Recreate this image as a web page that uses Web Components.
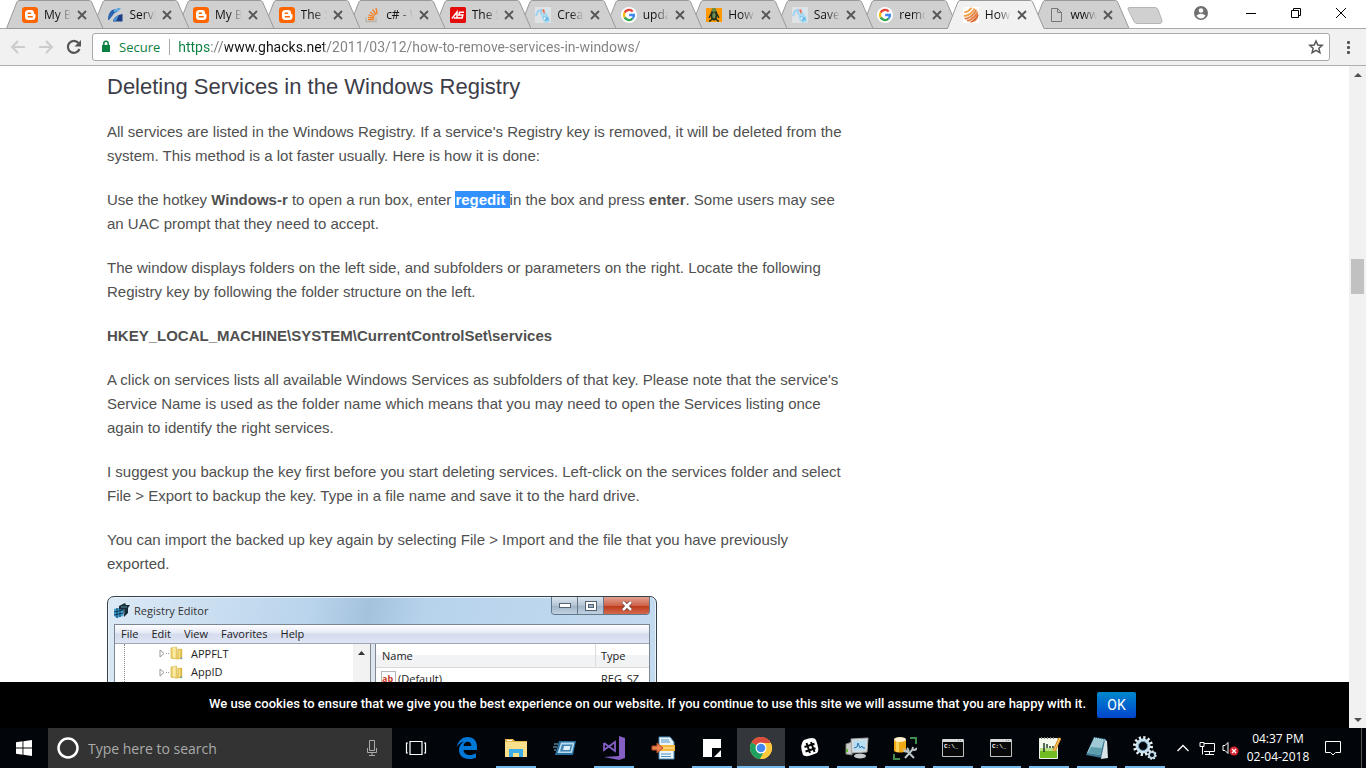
<!DOCTYPE html>
<html lang="en">
<head>
<meta charset="utf-8">
<title>How to remove services in Windows</title>
<style>
html,body{margin:0;height:100%}
body{font-family:"Open Sans","Noto Sans",sans-serif;font-size:12px;background:#fff;overflow:hidden}
</style>
</head>
<body>
<desktop-screen></desktop-screen>
<script>
const reset = `*{box-sizing:border-box}button,input{font:inherit;color:inherit;border:0;padding:0;margin:0;background:none}button{display:grid;place-items:center}svg{display:block}`;
const define = (name, html, setup) => customElements.define(name, class extends HTMLElement {
  constructor() {
    super();
    const t = document.createElement('template');
    t.innerHTML = `<style>${reset}</style>` + html;
    this.attachShadow({ mode: 'open' }).append(t.content.cloneNode(true));
  }
  connectedCallback() { if (setup) setup(this, this.shadowRoot); }
});

const icons = {
  blogger: `<rect width="16" height="16" rx="3" fill="#f60"/><path fill="#fff" d="M6.500 3h2.600A2.900 2.900 0 0 1 12 5.900c0 .8.200 1 .7 1 .4 0 .8.300.8.800v1.800a3.500 3.500 0 0 1-3.500 3.500H6.500A3.500 3.500 0 0 1 3 9.500v-3A3.500 3.500 0 0 1 6.500 3z"/><path stroke="#f60" stroke-width="1.400" stroke-linecap="round" d="M6.300 6.300h2.200M6.300 9.700h4"/>`,
  swirl: `<path fill="#2a63ae" d="M4 3l8-2-3 4q-3 .5-4 3L1 13H0q0-7 4-10z"/><path fill="#62b0e8" d="M6 2.500L13 1l-2 3-5 1z"/><path fill="#1b3f86" d="M14.500 7v7.500H5q1-6 9.500-7.500z"/><path fill="#4e8fd0" d="M5 14.500q1-5 6-6.500l-3 6.500z"/>`,
  stack: `<path fill="none" stroke="#b9b4ae" stroke-width="1.300" d="M2 10v4.500h10V10"/><path stroke="#f48024" stroke-width="1.300" d="M4 12.500h6M4 10.300l6 .6M4.500 7.800l5.800 1.800M6 5l5 3.500M8.500 2.500l3.700 5M12 1l1.200 6"/>`,
  as: `<rect width="16" height="16" rx="1.500" fill="#e60b0b"/><path fill="none" stroke="#fff" stroke-width="1.500" d="M2 11.500L7 5v6H4M14 5.300H9.500l-.7 2.700h4l-.7 3H7.500"/>`,
  figure: `<rect width="16" height="16" fill="#dfe3e6"/><path fill="#a9daf2" d="M6 7l5-2 3 5 1 5-5 1-3-4z"/><path fill="#6bbce8" d="M8 9l3 1 2 0 1 3-4 1z"/><path fill="#e8745a" d="M7 3l2-1 1 3-1 2z"/><path fill="none" stroke="#9fd2ef" stroke-width="2" d="M1 9l2-5 3-1 0 4"/><path stroke="#cfe9f7" stroke-width="2" d="M12 1l0 5"/><path fill="#fff" d="M9 10l2 1-2 2z"/>`,
  google: `<circle cx="8" cy="8" r="8" fill="#fff"/><g fill="none" stroke-width="2.300"><path stroke="#ea4335" d="M11.700 4.600A5 5 0 0 0 3.600 5.600"/><path stroke="#fbbc05" d="M3.600 5.600a5 5 0 0 0 0 4.800"/><path stroke="#34a853" d="M3.600 10.400a5 5 0 0 0 8 1.100"/><path stroke="#4285f4" d="M11.600 11.500A4.800 4.800 0 0 0 13 8H8.200"/></g>`,
  turtle: `<rect y="1" width="16" height="14" fill="#ff9a05"/><path stroke="#26351c" stroke-width="1.500" fill="none" d="M5 7l-2 4M11 7l2 4M6 12l-2 2h-1M10 12l2 2h1"/><ellipse cx="8" cy="8" rx="3.500" ry="5.500" fill="#20301c"/><ellipse cx="8" cy="3" rx="2.500" ry="2" fill="#648a45"/><ellipse cx="8" cy="8.500" rx="1.700" ry="3" fill="#6c8b57"/>`,
  ghacks: `<rect width="16" height="16" fill="#fff"/><clipPath id="r"><circle cx="8" cy="8" r="7.500"/></clipPath><g clip-path="url(#r)" fill="none" stroke-width="1.900"><path stroke="#efa24d" d="M0 5q5 1 9-5M0 9q8 0 12-8"/><path stroke="#e58245" d="M0 12q9 0 14-10M4 14q8-2 12-11"/><path stroke="#d9652f" d="M7 16q6-3 9-9M11 16q3-2 5-5"/></g>`,
  page: `<path fill="none" stroke="#777" d="M3.500 1.500h6l4 4v9h-10zM9.500 1.500v4h4"/>`,
  back: `<path fill="none" stroke="#ccc" stroke-width="2" d="M15 8H2M8 2L2 8l6 6"/>`,
  forward: `<path fill="none" stroke="#ccc" stroke-width="2" d="M1 8h13M8 2l6 6-6 6"/>`,
  reload: `<path fill="none" stroke="#555" stroke-width="2.200" d="M13.500 10A6 6 0 1 1 12.500 4"/><path fill="#555" d="M15 1v6.500H8.500z"/>`,
  lock: `<path fill="#0b8043" d="M4 6h8v7H4z"/><path fill="none" stroke="#0b8043" stroke-width="1.500" d="M5.800 6V4.500a2.200 2.200 0 0 1 4.400 0V6"/>`,
  star: `<path fill="none" stroke="#555" stroke-width="1.500" d="M8 2l1.800 4 4.400.4-3.300 2.900 1 4.300L8 11.300l-3.900 2.300 1-4.300-3.300-2.900 4.400-.4z"/>`,
  dots: `<g fill="#555"><rect x="7" y="2" width="3" height="3" rx="1"/><rect x="7" y="7" width="3" height="3" rx="1"/><rect x="7" y="12" width="3" height="3" rx="1"/></g>`,
  close: `<path stroke="#555" stroke-width="1.800" d="M4 4l8 8M12 4l-8 8"/>`,
  user: `<circle cx="8" cy="8" r="7" fill="#707070"/><circle cx="8" cy="5.500" r="2.300" fill="#fff"/><path fill="#fff" d="M3.500 10.500q4.500-3.500 9 0-1.500 3-4.500 3t-4.500-3z"/>`,
  min: `<path stroke="#000" d="M3 8.500h10"/>`,
  restore: `<path fill="none" stroke="#000" d="M3.500 5.500h7v7h-7zM5.500 5.500v-2h7v7h-2"/>`,
  x: `<path stroke="#000" d="M3 3l10 10M13 3L3 13"/>`,
  regedit: `<path fill="#43a6d8" d="M0 6l9-2v9l-6 2-3-2z"/><path stroke="#0d3752" d="M0 9l9-2M0 12l9-2M3 5v10M6 5v9"/><path fill="#182b38" d="M5 3l4-2 2-1 1 2 4 0-2 3 0 5-4 4-1-7-4-1z"/><path stroke="#5e8ea2" d="M7 4h6M10 6v5"/>`,
  folder: `<path fill="#edd068" stroke="#cfae43" stroke-width=".6" d="M1 2l6-1 1 13-7-1z"/><path fill="#f9eba5" d="M3 2l3-.6v11.500l-3-.6z"/><path fill="#dcb946" d="M8 3l5 0v11H8z"/><path fill="#f6df83" d="M9 4h2v9H9z"/><circle cx="12" cy="13" r="1" fill="#6ba1ba"/>`,
  start: `<path fill="#fff" d="M0 2.300L6.500 1.300v6.200H0zM7.400 1.200L16 0v7.500H7.400zM0 8.500h6.500v6.200L0 13.800zM7.400 8.500H16V16l-8.600-1.200z"/>`,
  cortana: `<circle cx="12" cy="12" r="9.500" fill="none" stroke="#fff" stroke-width="2.500"/>`,
  mic: `<path fill="none" stroke="#aaa" d="M5.500.5h5v10h-5zM3.500 8v4.500h9V8M8 12.500v3M5 15.500h6"/>`,
  taskview: `<path fill="none" stroke="#fff" stroke-width="1.200" d="M6 5.500h12v13H6zM4 7H2.500v10H4M20 7h1.500v10H20"/>`,
  edge: `<path fill="#0078d7" d="M2 11C3 4 8 1 12.500 1 18.500 1 22 5 22 10.500V14H8.500c.3 3.500 3 5 6 5 2.300 0 4.500-.6 6.500-1.800v4.200c-2 1.100-4.500 1.600-7 1.600C8 23 4 19.500 4 14c0-3.500 1.800-6.600 5-8.500-3.300.8-5.500 2.500-7 5.500zM8.600 10h7.800c0-2.800-1.500-4.200-3.800-4.200S8.900 7.500 8.600 10z"/>`,
  explorer: `<path fill="#e5b84b" d="M1 3h8l2 2h12v5H1z"/><path fill="#fbe08b" d="M1 6h22v15H1z"/><path fill="#fff" d="M3 4h5v1H3z"/><path fill="#3daee9" d="M5 13h14v8h-4v-4H9v4H5z"/>`,
  run: `<path fill="#276e9d" d="M6 5h17l-3 14H2z"/><path fill="#b5d9ef" d="M8 6.500h13.500L19 17H4.500z"/><path fill="#4383af" d="M9 8.500h10.500l-2 7H7z"/><path fill="#dceef8" d="M11 10h6.500l-1 4H10z"/><path stroke="#7fb8dc" d="M1 8h4M0 11h4M1 14h2"/>`,
  vs: `<path fill="#865fc5" d="M17 0l6 2v20l-6 2-15-3 15-1z"/><path fill="none" stroke="#865fc5" stroke-width="1.800" d="M2 7v7l11-8v9L2 7"/>`,
  import: `<path fill="#eaf4fb" stroke="#4d8ebc" d="M8 1h11l4 5v17H8z"/><path stroke="#5294c3" d="M10 4h8M10 6h9M10 18h10M10 20.500h10"/><path fill="#f6b73e" d="M9 9h15v6H9z"/><path stroke="#fbe7a5" d="M10 12h13"/><path fill="#ee8352" stroke="#b64b22" d="M1 10h5V7l6 5-6 5v-3H1z"/>`,
  note: `<path fill="#fff" d="M3 3h18v9h-9v9H3z"/><path fill="#fff" d="M14 21l7-7v7z"/>`,
  chrome: `<circle cx="12" cy="12" r="11" fill="#fbc93d"/><path fill="#dd4b3e" d="M12 12L2.500 6.500a11 11 0 0 1 19 0z"/><path fill="#1da160" d="M12 12L2.500 6.500A11 11 0 0 0 11 23l5-9z"/><path fill="#fbc93d" d="M12 7h9.800a11 11 0 0 1-10.800 16l5.500-9z"/><circle cx="12" cy="12" r="5.500" fill="#fff"/><circle cx="12" cy="12" r="4.300" fill="#4688f1"/>`,
  slack: `<path fill="#fff" d="M7 4q10-4 12 0 4 11 1 13-11 5-14 2-4-11 1-15z"/><path stroke="#080808" stroke-width="2" d="M9.500 7l3.500 10M14 6l3.500 10M7.500 11l10-3.300M8.500 15.500l10-3.300"/>`,
  monitor: `<path fill="#c9ccc9" stroke="#81857f" d="M1 8l6-2v13l-6-1z"/><path stroke="#5fb83a" stroke-width="2" d="M2 13v3"/><path fill="#d8dcde" stroke="#a3a9aa" d="M6 3l17-1-1 14-15 1z"/><path fill="#b9ddf3" d="M8 5l13-1-1 10-11 1z"/><path fill="none" stroke="#2773b2" d="M9 12l3-1 1-4 2 5 2-2 1 2h2"/><ellipse cx="15" cy="20" rx="6" ry="2.500" fill="#c8cccd"/>`,
  dbtools: `<path fill="#f0a814" d="M1 4v11c3 2 9 2 12 0V4z"/><path fill="#fbd259" d="M3 5v11h3V5z"/><ellipse cx="7" cy="3.500" rx="6" ry="2.500" fill="#fff2cf"/><path fill="none" stroke="#3f8d4d" stroke-width="2" d="M17 2h6v6M1 18v5h6"/><path fill="none" stroke="#bcc5c8" stroke-width="2" d="M13 14l8 8M20 13l-8 9"/><path fill="none" stroke="#bcc5c8" stroke-width="2" d="M11 13q0 3 3 2.500T14 12M20 11q-1 3 1 3t3-2"/>`,
  cmd: `<path fill="#080808" stroke="#bfc2c2" d="M1.500 3.500h21v17h-21z"/><path fill="#d9dbdb" d="M2 3h20v3H2z"/><path stroke="#8b9090" stroke-dasharray="1 1" d="M17 4.500h4"/><text x="3" y="12" font-family="Liberation Mono" font-weight="700" font-size="6" fill="#fff">C:\\_</text>`,
  notepad: `<path fill="#f4f9ee" stroke="#edf3e7" d="M2.500 2.500h18v20h-18z"/><path fill="#b9df83" d="M3 12h17v4H3z"/><path fill="#72bd24" d="M3 15h17v7H3z"/><path stroke="#777" stroke-dasharray="1 2" stroke-width="2" d="M4 2h15"/><path stroke="#233d25" stroke-width="1.500" d="M7 7v9M10 8v4M12 11h2M15 11h2"/><path stroke="#d48827" stroke-width="3" d="M23 2l-6 13"/><path stroke="#ffd86e" d="M23 2l-6 13"/>`,
  book: `<path fill="#3a7892" d="M9 1l12 2-4 19L1 19z"/><path fill="#9fc9d4" d="M9 2l10 2-4 15L2 17z"/><path fill="#5c9eae" d="M6 11l11 1-2 7-12-2z"/><path fill="#d9e4e7" d="M20 4l2 1 1 17-7 1z"/><path stroke="#dceef2" stroke-dasharray="1 1" d="M9 2l11 2"/>`,
  gears: `<circle cx="10" cy="10" r="6" fill="none" stroke="#c9e1ef" stroke-width="3"/><circle cx="10" cy="10" r="8.500" fill="none" stroke="#e8f2f7" stroke-width="3" stroke-dasharray="2.200 2.250"/><circle cx="10" cy="10" r="4.500" fill="none" stroke="#6c98b4"/><circle cx="19" cy="19" r="3" fill="none" stroke="#b9d4e4" stroke-width="2"/><circle cx="19" cy="19" r="4" fill="none" stroke="#dceaf1" stroke-width="1.500" stroke-dasharray="1.500 1.600"/>`,
  chevron: `<path fill="none" stroke="#fff" stroke-width="1.300" d="M2.500 11L8 5.500l5.500 5.500"/>`,
  network: `<path fill="none" stroke="#fff" d="M5 3.500h10.500v8H5M10.500 11.500v3M6 14.500h9M1 2.500h4v4H1zM3.500 6.500v8"/>`,
  volume: `<path fill="none" stroke="#fff" d="M1 6.500h2l3-3v11l-3-3H1z"/><circle cx="12" cy="12" r="4.500" fill="#d9232e"/><path stroke="#fff" stroke-width="1.300" d="M10 10l4 4M14 10l-4 4"/>`,
  action: `<path fill="none" stroke="#fff" d="M.5 1.500h15v11h-5L8 15l-2.500-2.500h-5z"/>`
};

customElements.define('ui-icon', class extends HTMLElement {
  connectedCallback() {
    if (this.shadowRoot) return;
    const name = this.getAttribute('name'), size = +this.getAttribute('size') || 16;
    const box = this.getAttribute('box') || 16;
    this.attachShadow({ mode: 'open' }).innerHTML = `<style>:host{display:block;flex:none}svg{display:block}</style><svg width="${size}" height="${size}" viewBox="0 0 ${box} ${box}" aria-hidden="true">${icons[name]}</svg>`;
  }
});

define('browser-tab', `<style>
:host{display:block;position:relative;flex:1 1 0;min-width:0;height:29px;margin-left:-12px}
:host(:first-child){margin-left:0}
.shape{position:absolute;inset:0;width:100%;height:100%}
.shape path{fill:#d0d0d0;stroke:#999}
:host([active]) .shape path{fill:#f1f1f1}
.base{stroke:#999}:host([active]) .base{stroke:#f1f1f1}
.row{position:relative;display:flex;align-items:center;height:29px;padding:1px 14px 0 16px}
.tab{display:flex;align-items:center;gap:6px;flex:1;min-width:0;height:28px;text-align:left}
.title{flex:1;min-width:0;overflow:hidden;white-space:nowrap;line-height:20px;margin-right:3px;mask-image:linear-gradient(90deg,#000 50%,transparent);color:#111}
</style>
<svg class="shape" viewBox="0 0 98 29" preserveAspectRatio="none"><path vector-effect="non-scaling-stroke" d="M.5 28.500L11 2Q12 .5 13 .5H84Q85 .5 86 2L97.500 28.500"/><line class="base" x1="1" x2="97" y1="28.500" y2="28.500"/></svg>
<div class="row"><button class="tab" role="tab"><span class="icon"></span><span class="title"><slot></slot></span></button><button class="close" aria-label="Close tab"><ui-icon name="close"></ui-icon></button></div>`,
(host, root) => { root.querySelector('.icon').innerHTML = `<ui-icon name="${host.getAttribute('icon')}"></ui-icon>`; });

define('tab-strip', `<style>
:host{display:flex;height:29px;padding-left:6px;background:#fff;border-bottom:1px solid #aaa;overflow:visible}
.tabs{display:flex;flex:1;min-width:0;height:29px;position:relative}
.new{width:36px;height:18px;margin:6px 0 0 -3px}
.user{width:44px;margin-left:16px;height:26px}
.win{width:45px;height:26px}
.ctl{display:flex;margin:0 3px 0 5px}
</style>
<div class="tabs" role="tablist"></div>
<button class="new" aria-label="New tab"><svg width="36" height="18"><path fill="#d0d0d0" stroke="#b5b5b5" d="M2 1.500h26q2 0 3 2l4 11q0 3-2 3H10q-2 0-3-2L1 3q0-1.500 1-1.500z"/></svg></button>
<button class="user" aria-label="Profile"><ui-icon name="user"></ui-icon></button>
<div class="ctl"><button class="win" aria-label="Minimize"><ui-icon name="min"></ui-icon></button><button class="win" aria-label="Restore"><ui-icon name="restore"></ui-icon></button><button class="win" aria-label="Close"><ui-icon name="x"></ui-icon></button></div>`,
(host, root) => {
  const tabs = [['blogger','My Blog'],['swirl','Servi'],['blogger','My Blog'],['blogger','The Se'],['stack','c# - W'],['as','The Se'],['figure','Crea'],['google','upda'],['turtle','How t'],['figure','Save'],['google','remo'],['ghacks','How to'],['page','www.g']];
  root.querySelector('.tabs').innerHTML = tabs.map(([i, t], n) => `<browser-tab icon="${i}" ${n === 11 ? 'active' : ''} style="z-index:${n === 11 ? 30 : 20 - n}">${t}</browser-tab>`).join('');
});

define('address-bar', `<style>
:host{display:flex;align-items:center;height:37px;padding:0 10px;background:#f1f1f1;border-bottom:1px solid #b0b0b0}
.nav{display:flex;gap:12px;margin-right:10px}
.field{display:flex;align-items:center;flex:1;height:28px;margin-right:10px;background:#fff;border:1px solid #a9a9a9;border-radius:3px;padding:0 5px;font-size:13px}
.secure{color:#0b8043;padding:0 9px 0 5px;line-height:20px}
.sep{width:1px;height:16px;background:#aaa;margin-right:8px}
input{flex:1;min-width:0;height:24px;outline:0;font:14px/20px Roboto,sans-serif;color:#767676;-webkit-text-fill-color:transparent;background:linear-gradient(90deg,#0b8043 33px,#777 33px 47px,#111 47px 146px,#808080 146px);background-clip:text;-webkit-background-clip:text}
</style>
<div class="nav"><button aria-label="Back"><ui-icon name="back"></ui-icon></button><button aria-label="Forward"><ui-icon name="forward"></ui-icon></button><button aria-label="Reload"><ui-icon name="reload"></ui-icon></button></div>
<div class="field"><ui-icon name="lock"></ui-icon><span class="secure">Secure</span><span class="sep"></span><input aria-label="Address" value="https://www.ghacks.net/2011/03/12/how-to-remove-services-in-windows/"><button aria-label="Bookmark"><ui-icon name="star"></ui-icon></button></div>
<button aria-label="Menu"><ui-icon name="dots"></ui-icon></button>`);

define('page-scrollbar', `<style>
:host{display:flex;flex-direction:column;width:17px;background:#f1f1f1}
button{width:17px;height:17px}.track{flex:1;padding:176px 2px 0}.thumb{height:35px;background:#c1c1c1}
</style><button aria-label="Scroll up"><svg width="8" height="4"><path fill="#505050" d="M4 0L8 4H0z"/></svg></button><div class="track"><div class="thumb"></div></div><button aria-label="Scroll down"><svg width="8" height="4"><path fill="#505050" d="M0 0h8L4 4z"/></svg></button>`);

define('registry-window', `<style>
:host{display:block;box-sizing:border-box;max-width:550px;height:200px;padding:0 6px;border:1px solid #37424d;border-radius:7px 7px 0 0;background:linear-gradient(100deg,#dce9f5,#b9d4ec 35%,#a5c2dd 45%,#b7d3ec 55%,#c4dbef);color:#222;font:11px/18px "Open Sans",sans-serif;box-shadow:inset 0 0 0 1px #e8f2fa}
.bar{display:flex;height:27px}
.title{display:flex;align-items:center;gap:4px;flex:1;color:#333}
.controls{display:flex;height:18px;border:1px solid #64788c;border-top:0;border-radius:0 0 4px 4px;overflow:hidden}
.controls button{width:26px;background:linear-gradient(#dce6ef,#b5c4d4 50%,#9eb2c5 50%,#c0d1e1);border-right:1px solid #64788c}
.controls button:last-child{width:45px;border:0;background:linear-gradient(#e2a090,#cf634a 50%,#b93616 50%,#d5694d)}
.frame{border:1px solid #7b8794;height:180px;background:#f0f0f0}
.menu{display:flex;gap:13px;height:19px;padding:0 6px;background:linear-gradient(#fdfdff,#e5e9f5 45%,#d4dbed 50%,#dfe5f4);border-bottom:1px solid #a0a6b2}
.panes{display:flex;gap:4px;background:#dde5ee}
.tree{display:flex;width:256px;background:#fff;height:160px;border-right:1px solid #828790}
ul{list-style:none;flex:1;margin:0 0 0 9px;padding:0 0 0 34px;border-left:1px dotted #888}
li{display:flex;align-items:center;height:18px}
li:first-child{height:19px}
li ui-icon{margin-right:6px}
.branch{display:block;flex:none}
.scroll{width:17px;background:#f2f2f2;display:grid;justify-items:center;align-content:start;padding-top:7px}
table{flex:1;border-collapse:separate;border-spacing:0;background:#fff;border-left:1px solid #828790;height:45px}
th{font-weight:400;text-align:left;height:24px;padding:0 6px;background:linear-gradient(#fff 50%,#f2f3f5 50%);border-bottom:1px solid #d8d8d8}
th+th{width:54px;border-left:1px solid #ddd;padding:0 5px}
td{padding:0 5px;height:20px}td:first-child div{display:flex;align-items:center;gap:2px}
td+td{padding:0 0 0 6px}
.ab{width:15px;height:16px;border:1px solid #b6b6b6;background:#fff;color:#c63a1e;font:bold 9px/13px "Open Sans",sans-serif}
</style>
<div class="bar"><div class="title"><ui-icon name="regedit"></ui-icon><span>Registry Editor</span></div><div class="controls">
<button aria-label="Minimize"><svg width="12" height="5"><rect x=".5" y=".5" width="11" height="4" fill="#fff" stroke="#556270"/></svg></button>
<button aria-label="Maximize"><svg width="12" height="10"><rect x=".5" y=".5" width="11" height="9" fill="#fff" stroke="#556270"/><rect x="3.500" y="3.500" width="5" height="3" fill="#9eb2c5" stroke="#556270"/></svg></button>
<button aria-label="Close"><svg width="12" height="10"><path stroke="#66352c" stroke-width="4" d="M2 1l8 8M10 1L2 9"/><path stroke="#fff" stroke-width="2.500" d="M2 1l8 8M10 1L2 9"/></svg></button></div></div>
<div class="frame"><div class="menu"><button>File</button><button>Edit</button><button>View</button><button>Favorites</button><button>Help</button></div>
<div class="panes"><div class="tree"><ul><li><svg class="branch" width="11" height="9"><path fill="#fff" stroke="#999" d="M1 1l4 3.500L1 8z"/><path stroke="#999" stroke-dasharray="1 1" d="M7 4.500h4"/></svg><ui-icon name="folder" size="15"></ui-icon>APPFLT</li><li><svg class="branch" width="11" height="9"><path fill="#fff" stroke="#999" d="M1 1l4 3.500L1 8z"/><path stroke="#999" stroke-dasharray="1 1" d="M7 4.500h4"/></svg><ui-icon name="folder" size="15"></ui-icon>AppID</li></ul><div class="scroll"><svg width="7" height="4"><path fill="#333" d="M3.500 0L7 4H0z"/></svg></div></div>
<table><thead><tr><th>Name</th><th>Type</th></tr></thead><tbody><tr><td><div><span class="ab">ab</span>(Default)</div></td><td>REG_SZ</td></tr></tbody></table></div></div>`);

define('web-article', `<style>
:host{display:block;flex:1;min-height:0;overflow:hidden;padding:8px 107px 0;font:15px/24px "Liberation Sans",Arial,sans-serif;color:#505050}
article{max-width:740px}
h2{font-size:22px;line-height:26px;font-weight:400;margin:0 0 20px;color:#3d3d49}
p{margin:0 0 20px}mark{background:#3390ff;color:#fff}
</style><article>
<h2>Deleting Services in the Windows Registry</h2>
<p>All services are listed in the Windows Registry. If a service's Registry key is removed, it will be deleted from the system. This method is a lot faster usually. Here is how it is done:</p>
<p>Use the hotkey <b>Windows-r</b> to open a run box, enter <mark><b>regedit</b> </mark>in the box and press <b>enter</b>. Some users may see an UAC prompt that they need to accept.</p>
<p>The window displays folders on the left side, and subfolders or parameters on the right. Locate the following Registry key by following the folder structure on the left.</p>
<p><b>HKEY_LOCAL_MACHINE\\SYSTEM\\CurrentControlSet\\services</b></p>
<p>A click on services lists all available Windows Services as subfolders of that key. Please note that the service's Service Name is used as the folder name which means that you may need to open the Services listing once again to identify the right services.</p>
<p>I suggest you backup the key first before you start deleting services. Left-click on the services folder and select File &gt; Export to backup the key. Type in a file name and save it to the hard drive.</p>
<p>You can import the backed up key again by selecting File &gt; Import and the file that you have previously exported.</p>
<registry-window></registry-window></article>`);

define('cookie-notice', `<style>
:host{display:flex;flex:none;align-items:center;justify-content:center;gap:11px;height:46px;padding-right:4px;background:#000;color:#fff;font:500 13px/20px Roboto,sans-serif;white-space:nowrap}
p{margin:0 0 2px}button{width:39px;height:26px;border-radius:2px;background:linear-gradient(#08c,#04c);font-weight:400;font-size:14px}
</style><p><slot></slot></p><button>OK</button>`);

define('task-button', `<style>
:host{display:block;flex:none;width:48px;height:40px}
button{width:100%;height:100%;position:relative}
:host([open]) button::after{content:"";position:absolute;left:4px;right:4px;bottom:0;height:2px;background:#76b9ed}
:host([active]) button{background:#33373b}:host([active]) button::after{left:0;right:0}
</style><button></button>`,
(host, root) => { const b = root.querySelector('button'); b.ariaLabel = host.getAttribute('icon'); b.innerHTML = `<ui-icon name="${host.getAttribute('icon')}" size="24" box="24"></ui-icon>`; });

define('task-bar', `<style>
:host{display:flex;flex:none;height:40px;background:#02060b;color:#fff}
.start{width:48px;flex:none}
.search{display:flex;align-items:center;flex:0 1 344px;min-width:0;padding:0 12px 0 8px;background:#333}
input{flex:1;min-width:0;margin-left:8px;height:30px;font-size:14px;outline:0}input::placeholder{color:#aaa;opacity:1}
.group{display:flex;flex:none;gap:1px;margin-left:3px}.group+.group{gap:0;margin:0}
.tray{display:flex;flex:none;align-items:center;margin-left:auto}
.tray button{width:24px;height:40px}
time{display:block;width:70px;text-align:center;font-size:12px;line-height:18px;margin-right:4px}
.tray .action{width:32px;margin-right:12px}
.show{width:5px;height:40px;border-left:1px solid #555}
</style>
<button class="start" aria-label="Start"><ui-icon name="start"></ui-icon></button>
<div class="search"><ui-icon name="cortana" size="24" box="24"></ui-icon><input placeholder="Type here to search" aria-label="Search"><button aria-label="Voice"><ui-icon name="mic"></ui-icon></button></div>
<task-button icon="taskview"></task-button>
<div class="group"><task-button icon="edge"></task-button><task-button icon="explorer" open></task-button><task-button icon="run"></task-button><task-button icon="vs" open></task-button><task-button icon="import"></task-button><task-button icon="note" open></task-button><task-button icon="chrome" open active></task-button></div>
<div class="group"><task-button icon="slack" open></task-button><task-button icon="monitor" open></task-button><task-button icon="dbtools" open></task-button><task-button icon="cmd" open></task-button><task-button icon="cmd" open></task-button><task-button icon="notepad" open></task-button><task-button icon="book" open></task-button><task-button icon="gears" open></task-button></div>
<div class="tray"><button aria-label="Hidden icons"><ui-icon name="chevron"></ui-icon></button><button aria-label="Network"><ui-icon name="network"></ui-icon></button><button aria-label="Volume"><ui-icon name="volume" size="18" box="18"></ui-icon></button><time>04:37 PM<br>02-04-2018</time><button class="action" aria-label="Notifications"><ui-icon name="action"></ui-icon></button><span class="show"></span></div>`);

define('desktop-screen', `<style>
:host{display:flex;flex-direction:column;height:100vh}
.view{display:flex;flex:1;min-height:0}
.page{display:flex;flex-direction:column;flex:1;min-width:0;background:#fff}
</style><tab-strip></tab-strip><address-bar></address-bar>
<div class="view"><div class="page"><web-article></web-article><cookie-notice>We use cookies to ensure that we give you the best experience on our website. If you continue to use this site we will assume that you are happy with it.</cookie-notice></div><page-scrollbar></page-scrollbar></div>
<task-bar></task-bar>`);
</script>
</body>
</html>
